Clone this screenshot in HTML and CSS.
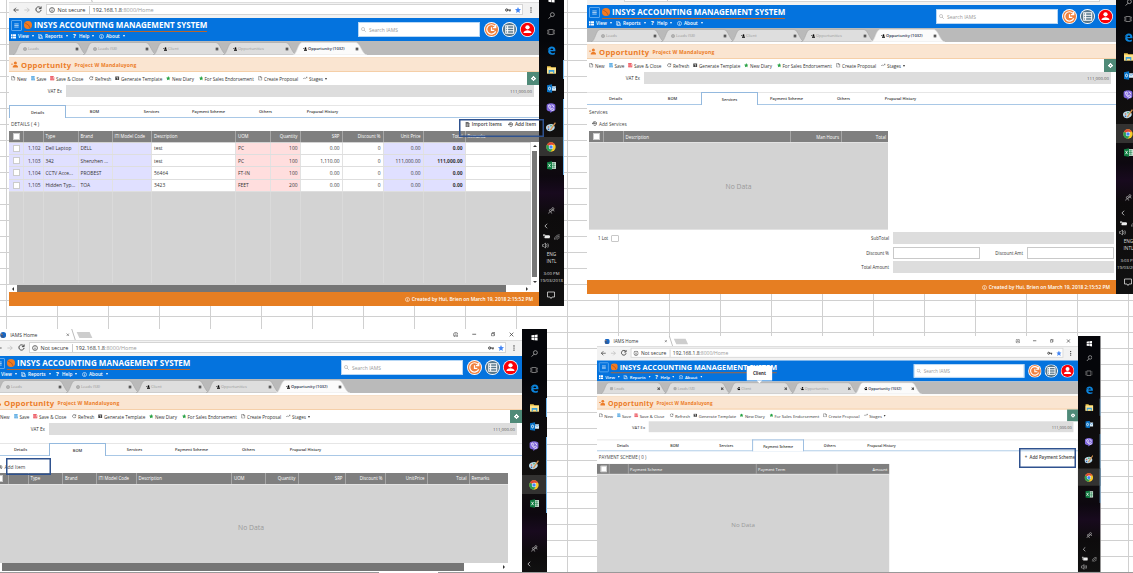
FILE: index.html
```html
<!DOCTYPE html>
<html lang="en">
<head>
<meta charset="utf-8">
<title>IAMS Home</title>
<link rel="stylesheet" href="styles.css">
</head>
<body>
<svg class="defs" aria-hidden="true">
  <symbol id="i-back" viewBox="0 0 16 16"><path d="M15 8H2M8 2L2 8l6 6" fill="none" stroke="currentColor" stroke-width="2"/></symbol>
  <symbol id="i-fwd" viewBox="0 0 16 16"><path d="M1 8h13M8 2l6 6-6 6" fill="none" stroke="currentColor" stroke-width="2"/></symbol>
  <symbol id="i-reload" viewBox="0 0 16 16"><path d="M13 4.500A6 6 0 1 0 14 9M14 1v5H9" fill="none" stroke="currentColor" stroke-width="2"/></symbol>
  <symbol id="i-info" viewBox="0 0 16 16"><circle cx="8" cy="8" r="6.500" fill="none" stroke="currentColor" stroke-width="1.800"/><path d="M8 7v5M8 4v1.500" stroke="currentColor" stroke-width="2"/></symbol>
  <symbol id="i-key" viewBox="0 0 16 16"><circle cx="4.500" cy="8" r="3" fill="none" stroke="currentColor" stroke-width="2.500"/><path d="M7 8h9M13 8v4" stroke="currentColor" stroke-width="2.500"/></symbol>
  <symbol id="i-star" viewBox="0 0 16 16"><path d="M8 0l2.300 5.500 5.700.5-4.400 3.800L13 16 8 12.500 3 16l1.400-6.200L0 6l5.700-.5z" fill="currentColor"/></symbol>
  <symbol id="i-dots" viewBox="0 0 16 16"><circle cx="8" cy="2.500" r="1.600"/><circle cx="8" cy="8" r="1.600"/><circle cx="8" cy="13.500" r="1.600"/></symbol>
  <symbol id="i-x" viewBox="0 0 16 16"><path d="M2 2l12 12M14 2L2 14" stroke="currentColor" stroke-width="2.200"/></symbol>
  <symbol id="i-xb" viewBox="0 0 16 16"><path d="M3 3l10 10M13 3L3 13" stroke="currentColor" stroke-width="4.500"/></symbol>
  <symbol id="i-min" viewBox="0 0 16 16"><path d="M1 8h14" stroke="currentColor" stroke-width="2.500"/></symbol>
  <symbol id="i-max" viewBox="0 0 16 16"><path d="M2 5h9v9H2zM5 5V2h9v9h-3" fill="none" stroke="currentColor" stroke-width="2"/></symbol>
  <symbol id="i-prof" viewBox="0 0 16 16"><circle cx="8" cy="8" r="6.700" fill="none" stroke="currentColor" stroke-width="1.600"/><path d="M3 9.500h10M6 5.500h4" stroke="currentColor" stroke-width="1.600"/></symbol>
  <symbol id="i-menu" viewBox="0 0 16 16"><path d="M1 3h14M1 8h14M1 13h14" stroke="currentColor" stroke-width="2"/></symbol>
  <symbol id="i-logo" viewBox="0 0 16 16"><circle cx="8" cy="8" r="8" fill="#f47b20"/><path d="M2 4l7 4 3 6" fill="none" stroke="#934f2c" stroke-width="1.300"/></symbol>
  <symbol id="i-fav" viewBox="0 0 16 16"><circle cx="8" cy="8" r="8" fill="#1767c4"/><path d="M1 5c3-1 5 0 6 3s2 5 5 6c-5 3-11 0-12-5z" fill="#38598c"/><path d="M1 3l6 3-3 1z" fill="#ff9345"/></symbol>
  <symbol id="i-grid" viewBox="0 0 16 16"><path d="M0 1h5v6H0zM6.500 1H16v6H6.500zM0 8.500h5v6H0zM6.500 8.500H16v6H6.500z" fill="currentColor"/></symbol>
  <symbol id="i-file" viewBox="0 0 16 16"><path d="M2.500 1h7l4 4v10h-11zM9 1v5h5" fill="none" stroke="currentColor" stroke-width="1.700"/></symbol>
  <symbol id="i-import" viewBox="0 0 16 16"><path d="M2 0h8l4 4v12H2z" fill="currentColor" fill-opacity=".8"/><path d="M5 7h6M5 10h6M5 13h4" stroke="#fff" stroke-width="1.400"/></symbol>
  <symbol id="i-copy" viewBox="0 0 16 16"><path d="M1 1h8l2 2v10H1zM5 5h7l3 3v7H5z" fill="none" stroke="currentColor" stroke-width="1.700"/></symbol>
  <symbol id="i-save" viewBox="0 0 16 16"><path d="M1 1h10l4 4v10H1z" fill="none" stroke="currentColor" stroke-width="2"/><path d="M4 1v5h7V1M4 15V9h8v6" fill="currentColor" fill-opacity=".5" stroke="currentColor" stroke-width="1.500"/></symbol>
  <symbol id="i-gear" viewBox="0 0 16 16"><path d="M1 2h14v12H1z" fill="currentColor"/><path d="M5 5h6v2H5zM7 7h2v5H7z" fill="#fff"/></symbol>
  <symbol id="i-plug" viewBox="0 0 16 16"><path d="M6 0h4v3l3 0v3h3v4h-3v3h-3v3H6v-3H3v-3H0V6h3V3h3z" fill="currentColor"/><circle cx="8" cy="8" r="2" fill="#4f8a78"/></symbol>
  <symbol id="i-stage" viewBox="0 0 16 16"><path d="M0 11l4-4 4 2 7-5M11 4h4v4" fill="none" stroke="currentColor" stroke-width="1.600"/></symbol>
  <symbol id="i-person" viewBox="0 0 16 16"><circle cx="10" cy="4.500" r="3.500"/><path d="M4 15v-2c0-3 3-4 6-4s6 1 6 4v2zM0 6h5v2H0z"/></symbol>
  <symbol id="i-globe" viewBox="0 0 16 16"><circle cx="8" cy="8" r="6.500" fill="currentColor" fill-opacity=".45" stroke="currentColor" stroke-width="2"/><path d="M2 6h12M2 10h12M8 2v12" stroke="currentColor"/></symbol>
  <symbol id="i-hist" viewBox="0 0 16 16"><path d="M3 8a6 6 0 1 1 2 4.500M0 6l3 4 3-4M9 5v4h3M6 7h5" fill="none" stroke="currentColor" stroke-width="2.200"/></symbol>
  <symbol id="i-search" viewBox="0 0 16 16"><circle cx="6.500" cy="6.500" r="5" fill="none" stroke="currentColor" stroke-width="1.600"/><path d="M10 10l5 5" stroke="currentColor" stroke-width="2"/></symbol>
  <symbol id="i-clock" viewBox="0 0 16 16"><circle cx="8" cy="8" r="8" fill="#fff"/><circle cx="8" cy="8" r="7" fill="#f0813f"/><path d="M12 5A5 5 0 1 0 12.500 10M12.500 3v3H9.500M8 5.500V9h3" fill="none" stroke="#fff" stroke-width="1.300"/></symbol>
  <symbol id="i-list" viewBox="0 0 16 16"><circle cx="8" cy="8" r="8" fill="#fff"/><circle cx="8" cy="8" r="7" fill="#56768a"/><path d="M4 4h8.500v8H4zM4 6.700h8.500M4 9.400h8.500M6 4v8" fill="none" stroke="#fff" stroke-width="1.100"/></symbol>
  <symbol id="i-user" viewBox="0 0 16 16"><circle cx="8" cy="8" r="8" fill="#fff"/><circle cx="8" cy="8" r="7.200" fill="#fb0007"/><circle cx="8" cy="5.700" r="2.300" fill="#fff"/><path d="M3.700 11.700c0-2.200 2.500-3 4.300-3s4.300.8 4.300 3z" fill="#fff"/></symbol>
  <symbol id="i-tab" viewBox="0 0 75 13"><path d="M0 13C4 12.500 5 .5 9 .5H63C67 .5 69 12.500 74 13z"/></symbol>
  <symbol id="t-win" viewBox="0 0 16 16"><path d="M1 3l6-1v5.500H1zM8 2l7-1v6.500H8zM1 8.500h6V14l-6-1zM8 8.500h7V15l-7-1z" fill="#fff"/></symbol>
  <symbol id="t-search" viewBox="0 0 16 16"><circle cx="10" cy="6" r="4.500" fill="none" stroke="#ccc" stroke-width="1.500"/><path d="M7 9.500L1.500 15" stroke="#ccc" stroke-width="1.700"/></symbol>
  <symbol id="t-view" viewBox="0 0 16 16"><path d="M3.500 3h9v10h-9zM1.500 4.500H0v7h1.500M14.500 4.500H16v7h-1.500" fill="none" stroke="#999" stroke-width="1.500"/></symbol>
  <symbol id="t-edge" viewBox="0 0 16 16"><path d="M1 8C2 3 5 1 8.500 1 13 1 15.500 4 15 9.500H6c.3 3.500 4.500 4 8 2.200v3C8 17 2 15 2 9.500 2 7 4 5 6 4.300 4 4.500 2 6 1 8zM6 7h5c0-3.500-4.500-3.500-5 0z" fill="#0c84dc"/></symbol>
  <symbol id="t-folder" viewBox="0 0 16 16"><path d="M0 2h6l2 2h8v11H0z" fill="#efc750"/><path d="M0 5h16v10H0z" fill="#ffe28a"/><path d="M3 9h10v6h-2v-3H5v3H3z" fill="#3ca1dc"/></symbol>
  <symbol id="t-outlook" viewBox="0 0 16 16"><path d="M8 4h8v8H8z" fill="#d9ebf8"/><path d="M9 5l3.500 3L16 5" stroke="#1675c4" fill="none"/><path d="M0 2l9-1.500v15L0 14z" fill="#0872c6"/><ellipse cx="4.500" cy="8" rx="1.800" ry="2.500" fill="none" stroke="#fff" stroke-width="1.500"/></symbol>
  <symbol id="t-viber" viewBox="0 0 16 16"><path d="M1 4Q1 1 8 .5 15 1 15 4v6q0 3-5 3.500L7 16v-2.500Q1 13 1 10z" fill="#8068dd"/><path d="M4 4l2-1 1.500 2.500L6.500 7 9 9.500l1.500-1 2 1.500-1 2C8 12 4 8 4 4zM9 3q3.500.5 3.500 4" fill="none" stroke="#fff" stroke-width="1.200"/></symbol>
  <symbol id="t-paint" viewBox="0 0 16 16"><ellipse cx="7" cy="9" rx="7" ry="5.500" fill="#b9d8e8" transform="rotate(-15 7 9)"/><circle cx="4" cy="8" r="1.300" fill="#d96542"/><circle cx="8" cy="6" r="1.300" fill="#3aa055"/><circle cx="4" cy="11.500" r="1.300" fill="#345cab"/><path d="M15 1L7 13" stroke="#d8954d" stroke-width="2"/></symbol>
  <symbol id="t-chrome" viewBox="0 0 16 16"><circle cx="8" cy="8" r="7.500" fill="#f7c928"/><path d="M8 8L1.500 4.200A7.500 7.500 0 0 1 14.500 4.500H8z" fill="#df4437"/><path d="M8 8L1.500 4.200A7.500 7.500 0 0 0 7.500 15.500L11 10z" fill="#2c9d58"/><circle cx="8" cy="8" r="3.600" fill="#fff"/><circle cx="8" cy="8" r="2.800" fill="#4285f4"/></symbol>
  <symbol id="t-excel" viewBox="0 0 16 16"><path d="M8 2h8v12H8z" fill="#d9efe2"/><path d="M9 5h6M9 8h6M9 11h6M12 3v10" stroke="#1f7a48"/><path d="M0 2l9-1.500v15L0 14z" fill="#107c41"/><path d="M2.500 5l4 6M6.500 5l-4 6" stroke="#fff" stroke-width="1.300"/></symbol>
  <symbol id="t-people" viewBox="0 0 16 16"><g fill="none" stroke="#ccc" stroke-width="1.400"><circle cx="11" cy="4" r="2.500"/><path d="M8 10c0-4 6-4 6 0"/><circle cx="5.500" cy="8" r="2.300"/><path d="M1.500 15c0-5 7-5 7 0"/></g></symbol>
  <symbol id="t-chev" viewBox="0 0 16 16"><path d="M11 2L5 8l6 6" fill="none" stroke="#ddd" stroke-width="2"/></symbol>
  <symbol id="t-batt" viewBox="0 0 16 16"><path d="M4 5h11v7H4zM15 7h1v3h-1z" fill="#eee"/><path d="M0 3h5v4H0zM2 7v4h3" fill="#aaa"/></symbol>
  <symbol id="t-wifi" viewBox="0 0 16 16"><path d="M1 15C1 8 8 2 15 2M5 15c0-5 4-9 10-9M9 15c0-3 3-5 6-5" fill="none" stroke="#bbb" stroke-width="1.600"/></symbol>
  <symbol id="t-sound" viewBox="0 0 16 16"><path d="M1 6h3l4-4v12L4 10H1zM10 5q3 3 0 6M13 3q4 5 0 10" fill="none" stroke="#ccc" stroke-width="1.400"/></symbol>
  <symbol id="t-note" viewBox="0 0 16 16"><path d="M1 2h14v10H10l-2 3-2-3H1z" fill="none" stroke="#ddd" stroke-width="1.600"/></symbol>
</svg>
<main class="sheet" id="sheet"></main>
<script src="app.js"></script>
</body>
</html>
```

FILE: styles.css
```css
* { box-sizing: border-box; }
html, body { margin: 0; height: 100%; overflow: hidden; }
body { font-family: "Open Sans", "Noto Sans", sans-serif; font-size: 4.9px; color: #333; }
.defs { position: absolute; width: 0; height: 0; }
svg { display: block; flex: none; }
.sheet {
  position: relative; width: 1133px; height: 573px; overflow: hidden; background-color: #fff;
  background-image:
    repeating-linear-gradient(to right, transparent 0 6px, #d0d0d0 6px 7px, transparent 7px 51px),
    repeating-linear-gradient(to bottom, transparent 0 12px, #d0d0d0 12px 13px, transparent 13px 16px);
}
.baseline { position: absolute; left: 0; right: 0; bottom: 0; height: 1px; display: flex; justify-content: space-between; background: #fff; }
.baseline-a { width: 379px; background: #999; }
.baseline-b { width: 695px; background: #999; }

/* one pasted window: browser column + taskbar column */
.shot { position: absolute; display: flex; overflow: hidden; background: #fff; white-space: nowrap; transform-origin: 0 0; }
.shot-details { left: 9px; top: -9px; width: 555px; height: 315px; --main: 530px; }
.shot-services { left: 587px; top: -22px; width: 554px; height: 316px; --main: 529px; }
.shot-bom { left: -8px; top: 329px; width: 555px; height: 243px; --main: 530px; }
.shot-payment { left: 597px; top: 336px; width: 555px; height: 260px; --main: 530px; transform: scale(.9075); }
.main { width: var(--main); flex: none; display: flex; flex-direction: column; position: relative; }

.ctabs { height: 11px; flex: none; display: flex; align-items: center; padding: 0 8px 0 8px; }
.ctab { display: flex; align-items: center; width: 74px; height: 11px; border-right: 1px solid #bbb; transform: skewX(18deg); padding-right: 4px; }
.ctab > * { transform: skewX(-18deg); }
.ctab-title { margin-left: 4px; flex: 1; font-size: 5px; }
.newtab { width: 13px; height: 6px; margin-left: 4px; background: #cdcdcd; transform: skewX(25deg); }
.winctl { margin-left: auto; display: flex; align-items: center; gap: 14px; color: #333; }
.urlrow { height: 16px; flex: none; background: #f2f2f2; display: flex; align-items: center; padding: 0 5px 1.500px 4px; gap: 5px; border-top: 1px solid #ddd; }
.urlbox { margin-left: -1px; height: 11px; width: 478px; background: #fff; border: 1px solid #d5d5d5; display: flex; align-items: center; padding: 0 1.500px; font-size: 5.5px; }
.secure { margin-left: 3px; padding-right: 4px; border-right: 1px solid #ccc; margin-right: 3px; width: 32px; }
.path { color: #999; }
.key { margin-left: auto; margin-right: 4px; }
.blue { color: #4285f4; }
.fade { color: #bbb; }

.head { height: 23px; flex: none; background: #0473de; color: #fff; display: flex; }
.brand { width: 349px; display: flex; flex-direction: column; }
.brandrow { height: 14px; display: flex; align-items: center; padding-left: 2px; }
.burger { width: 11px; height: 11px; border: 1px solid #5ca7ee; display: flex; align-items: center; justify-content: center; margin-right: 2px; border-radius: 1px; }
.brandname { display: flex; align-items: center; height: 13px; margin-top: 1px; width: 183px; border-bottom: 1px solid #b8662e; gap: 2px; }
.brandtext { font-size: 8.050px; font-weight: 700; line-height: 12px; }
.menurow { display: flex; height: 8px; align-items: center; padding-left: 2px; font-weight: 600; font-size: 4.700px; }
.mi { display: flex; align-items: center; gap: 2px; }
.mi-view { width: 27px; } .mi-reports { width: 34px; } .mi-help { width: 27px; }
.caret { width: 0; height: 0; border: 1.600px solid transparent; border-top: 2px solid currentColor; border-bottom: 0; margin-left: 1px; }
.qm { font-weight: 700; font-size: 6px; width: 5px; text-align: center; }
.search { width: 122px; height: 15px; background: #fff; border: 1px solid #b7d7f5; margin-top: 4px; color: #999; display: flex; align-items: center; gap: 3px; padding-left: 2px; font-size: 5px; }
.round { display: flex; gap: 3.300px; margin: 4px 0 0 3.500px; }

.tabs { height: 14px; flex: none; background: #bababa; display: flex; align-items: flex-end; padding-left: 4px; margin-bottom: 2px; font-size: 4px; color: #999; }
.tab { width: 70px; height: 13px; display: flex; align-items: center; position: relative; padding: 0 4px 0 9.500px; gap: 1.500px; }
.tab-shape { position: absolute; left: 0; top: 0; fill: #dedede; stroke: #a5a5a5; stroke-width: .6px; }
.tab > * { position: relative; }
.tab > .tab-shape { position: absolute; }
.tab-close { margin-left: auto; color: #555; }
.tab-on { color: #222c48; font-weight: 600; }
.tab-on .tab-shape { fill: #fbfbfb; stroke: #ddd; }
.peach { height: 15px; flex: none; background: #fae5d1; border-bottom: 1px solid #f5cfa8; border-top: 1px solid #f6dfc8; display: flex; align-items: center; padding-left: 2px; color: #ec7d29; fill: currentColor; font-weight: 700; }
.peach-t { font-size: 7.700px; margin: 0 3px; letter-spacing: .26px; }
.peach-s { font-size: 5px; padding-top: 1px; letter-spacing: .13px; }
.tools { height: 12px; margin-bottom: 1px; flex: none; display: grid; grid-template-columns: 19.500px 19.500px 39px 26px 51px 32.500px 59.500px 45px 1fr 12px; align-items: center; padding-left: 2px; font-size: 4.600px; }
.tool { display: flex; align-items: center; gap: 1.500px; }
.plug { height: 13px; align-self: start; background: #4f8a78; color: #fff; display: flex; align-items: center; justify-content: center; }
.c-blue { color: #2b93dc; } .c-red { color: #e8232f; } .c-green { color: #27a244; } .c-dark { color: #444; }
.vat { height: 12px; flex: none; display: flex; align-items: center; padding-right: 5px; font-size: 4.600px; }
.vat-l { width: 57px; text-align: right; padding-right: 4px; }
.vat-f { flex: 1; height: 12px; background: #ddd; display: flex; align-items: center; justify-content: flex-end; padding-right: 2px; color: #555; font-size: 4.300px; }
.sub { margin-top: 8px; height: 13px; flex: none; display: flex; border-top: 1px solid #e6e6e6; border-bottom: 1px solid #a9c8e6; font-size: 3.950px; font-weight: 600; color: #333; }
.sub-t { width: 57px; display: flex; align-items: center; justify-content: center; }
.sub-on { height: 13px; margin-top: -1px; background: #fff; border: 1px solid #94b9de; border-bottom: 0; }
.panel { flex: 1; min-height: 0; display: flex; flex-direction: column; }
.foot { height: 14px; flex: none; background: #e67e22; color: #fff; display: flex; align-items: center; justify-content: flex-end; gap: 1.500px; padding-right: 6px; font-size: 4.900px; font-weight: 600; }

.cap { display: flex; align-items: center; flex: none; color: #444; padding-left: 2px; }
.cap-actions { margin-left: auto; display: flex; gap: 6px; font-weight: 600; font-size: 4.800px; padding-right: 3px; }
.act { display: flex; align-items: center; gap: 2px; }
.row, .hrow { display: grid; grid-template-columns: var(--cols); flex: none; }
.hrow { height: 11px; background: #7f7f7f; color: #fff; font-size: 4.400px; }
.hrow > * { border-right: 1px solid #a7a7a7; }
.hrow > :last-child { border-right: 0; }
.cell { display: flex; align-items: center; padding: 0 2px; min-width: 0; overflow: hidden; }
.num { justify-content: flex-end; }
.box { width: 7px; height: 7px; background: #fff; border: .5px solid #ccc; margin-left: 1.500px; flex: none; }
.nodata { background: #d3d3d3; color: #999; display: flex; align-items: center; justify-content: center; font-size: 6.800px; flex: none; border-top: 1px solid #e2e2e2; }

/* details */
.shot-details .cap { height: 12.500px; }
.gridwrap { display: flex; height: 143.500px; flex: none; }
.gridhead, .gridbody { --cols: 14.500px 20px 35px 34px 39.500px 84px 34.500px 30px 42px 41px 40px 42px 1fr; }
.gridbody { width: 522px; background: #d3d3d3; padding-top: 1px; }
.row { height: 12.400px; border-bottom: 1px solid #dedede; background: #fff; font-size: 4.900px; }
.row > * { border-right: 1px solid #e2e2e2; }
.lav { background: #e0e0ff; } .pink { background: #ffdede; } .bold { font-weight: 700; }
.guides { display: grid; grid-template-columns: var(--cols); height: 91px; }
.guides > * { border-right: 1px solid #dadada; }
.vscroll { width: 8px; display: flex; flex-direction: column; align-items: center; justify-content: space-between; padding: 3px 0 2px; }
.vthumb { width: 5px; height: 126px; background: #777; margin-right: 1px; }
.up, .down, .left, .right { border: 2px solid transparent; width: 0; height: 0; }
.up { border-bottom: 2.500px solid #333; border-top: 0; } .down { border-top: 2.500px solid #333; border-bottom: 0; }
.left { border-right: 2.500px solid #333; border-left: 0; } .right { border-left: 2.500px solid #333; border-right: 0; }
.hscroll { display: flex; align-items: center; height: 8px; flex: none; }
.hthumb { height: 8px; background: #757575; }
.shot-details .hthumb { width: 489px; margin: 0 20.500px 0 3px; }
.shot-details .hscroll { padding-left: 2.500px; }

/* services */
.shot-services .cap { height: 15px; }
.shot-services .cap-top { height: 11px; padding-top: 3px; }
.act-services { padding-left: 3px; font-size: 4.700px; }
.shot-services .grid { margin-left: 2px; width: 299px; --cols: 14.500px 20px 167px 51.500px 1fr; }
.shot-services .nodata { height: 88px; border-bottom: 1px solid #e2e2e2; }
.totals { display: grid; grid-template-columns: 306px 87px 47px 1fr; row-gap: 2.500px; grid-template-rows: 12px 12px 12px; margin: 2px 2px 6px 0; align-items: center; font-size: 4.400px; }
.lot { display: flex; align-items: center; gap: 3px; padding-left: 11px; }
.lot-box { width: 8px; height: 7px; border: 1px solid #c8c8c8; border-radius: 1px; }
.lotlabel { display: flex; justify-content: space-between; align-items: center; padding-right: 4px; }
.tl { text-align: right; padding-right: 4px; }
.fill { grid-column: 2 / 5; background: #ddd; height: 12px; }
.inp { border: 1px solid #c9c9c9; height: 12px; }

/* bom */
.shot-bom .cap { height: 16.500px; padding: 5px 0 0 6px; }
.shot-bom .grid { width: 516px; --cols: 16.500px 20px 34.500px 33.500px 40px 95.500px 34px 32.500px 47px 40px 42px 42px 1fr; }
.shot-bom .nodata { height: 79px; padding-top: 8px; padding-left: 2px; }
.shot-bom .hthumb { width: 462px; margin-left: 10px; margin-right: 39px; }

/* payment */
.shot-payment .cap { height: 14px; }
.shot-payment .grid { width: 322px; --cols: 13.500px 21px 141px 89.500px 1fr; }
.shot-payment .nodata { height: 120px; padding-bottom: 8px; }
.tip { position: absolute; left: 165px; top: 33px; width: 28px; height: 16px; background: #fff; display: flex; align-items: center; justify-content: center; font-weight: 700; font-size: 4.900px; }
.tip::after { content: ""; position: absolute; top: 16px; left: 11px; border: 3px solid transparent; border-top-color: #fff; border-bottom: 0; }

/* outlines drawn over the windows */
.mark { position: absolute; border: 1px solid #2f528f; box-shadow: inset 0 0 0 .5px #2f528f; }
.mark-a { left: 459px; top: 119px; width: 85px; height: 18px; }
.mark-b { left: 6px; top: 458px; width: 45px; height: 17px; }
.mark-c { left: 1019px; top: 448px; width: 57px; height: 20px; }

.task { width: 25px; flex: none; background: linear-gradient(#05060a 0 50px, #0b0a0d 70px, #12100f 150px, #0d080f 185px, #180a1e 202px, #0d0b0c 225px, #111 100%); display: flex; flex-direction: column; color: #ddd; font-size: 4.700px; }
.ti { height: 19.200px; flex: none; display: flex; align-items: center; justify-content: center; border-right: 1px solid transparent; }
.ti-s { height: 16px; } .ti-v { height: 18px; }
.run { border-right-color: #76b9ed; } .hot { background: #333231; }
.gap { height: 27.500px; flex: none; }
.ti-p { height: 16px; } .ti-c { height: 14px; padding-right: 10px; }
.ti-w { height: 8px; gap: 4px; } .ti-o { height: 9px; padding-right: 11px; }
.lang { height: 16px; line-height: 7px; text-align: center; flex: none; padding-top: 1px; margin-bottom: 4px; }
.clock { height: 15px; line-height: 7px; text-align: center; flex: none; font-size: 4.300px; display: flex; flex-direction: column; align-items: center; }
.ti-n { height: 14px; margin-top: 3px; }
```

FILE: app.js
```js
const icon = (id, w, h = w, cls = '') =>
  `<svg class="${cls}" width="${w}" height="${h}"><use href="#${id}"/></svg>`;

const browserBar = () => `
  <div class="ctabs">
    <div class="ctab">${icon('i-fav', 6)}<span class="ctab-title">IAMS Home</span>${icon('i-x', 3.5)}</div>
    <div class="newtab"></div>
    <div class="winctl">${icon('i-prof', 5.5)}${icon('i-min', 4.5)}${icon('i-max', 4.5)}${icon('i-x', 5)}</div>
  </div>
  <div class="urlrow">
    ${icon('i-back', 6)}${icon('i-fwd', 6, 6, 'fade')}${icon('i-reload', 7)}
    <div class="urlbox">${icon('i-info', 6)}<span class="secure">Not secure</span><span>192.168.1.8</span><span class="path">:8000/Home</span>
      ${icon('i-key', 6, 6, 'key')}${icon('i-star', 6, 6, 'blue')}</div>
    ${icon('i-dots', 6)}
  </div>`;

const header = () => `
  <div class="head">
    <div class="brand">
      <div class="brandrow"><div class="burger">${icon('i-menu', 5)}</div>
        <div class="brandname">${icon('i-logo', 8)}<span class="brandtext">INSYS ACCOUNTING MANAGEMENT SYSTEM</span></div></div>
      <div class="menurow">
        <div class="mi mi-view">${icon('i-grid', 5)}<span>View</span><i class="caret"></i></div>
        <div class="mi mi-reports">${icon('i-copy', 5)}<span>Reports</span><i class="caret"></i></div>
        <div class="mi mi-help"><span class="qm">?</span><span>Help</span><i class="caret"></i></div>
        <div class="mi">${icon('i-info', 5)}<span>About</span><i class="caret"></i></div>
      </div>
    </div>
    <div class="search">${icon('i-search', 5)}Search IAMS</div>
    <div class="round">${icon('i-clock', 15)}${icon('i-list', 15)}${icon('i-user', 15)}</div>
  </div>`;

const docTabs = [['i-globe', 'Leads'], ['i-globe', 'Leads (58)'], ['i-person', 'Client'], ['i-person', 'Opportunities'], ['i-person', 'Opportunity (1032)']];
const tabStrip = () => `<div class="tabs">${docTabs.map(([ic, t], i) => `
  <div class="tab ${i === 4 ? 'tab-on' : ''}">${icon('i-tab', 75, 13, 'tab-shape')}${icon(ic, 4)}<span>${t}</span>${icon('i-xb', 4, 4, 'tab-close')}</div>`).join('')}</div>`;

const toolItems = [['i-file', 'New', 'c-dark'], ['i-save', 'Save', 'c-blue'], ['i-save', 'Save &amp; Close', 'c-red'], ['i-reload', 'Refresh', 'c-dark'],
  ['i-gear', 'Generate Template', 'c-dark'], ['i-star', 'New Diary', 'c-green'], ['i-star', 'For Sales Endorsement', 'c-green'],
  ['i-file', 'Create Proposal', 'c-dark'], ['i-stage', 'Stages', 'c-dark']];
const pageHead = active => `
  <div class="peach">${icon('i-person', 7)}<span class="peach-t">Opportunity</span><span class="peach-s">Project W Mandaluyong</span></div>
  <div class="tools">${toolItems.map(([ic, t, c]) => `<div class="tool">${icon(ic, 4.5, 4.5, c)}${t}${t === 'Stages' ? '<i class="caret"></i>' : ''}</div>`).join('')}
    <div class="plug">${icon('i-plug', 5)}</div></div>
  <div class="vat"><span class="vat-l">VAT Ex</span><div class="vat-f">111,000.00</div></div>
  <div class="sub">${['Details', 'BOM', 'Services', 'Payment Scheme', 'Others', 'Proposal History'].map((t, i) =>
    `<div class="sub-t ${i === active ? 'sub-on' : ''}">${t}</div>`).join('')}</div>`;

const footer = () => `<div class="foot">${icon('i-info', 5)}Created by Hui, Brien on March 19, 2018 2:15:52 PM</div>`;

const taskbar = time => `
  <div class="task">
    <div class="ti ti-s">${icon('t-win', 7)}</div><div class="ti ti-s">${icon('t-search', 7)}</div><div class="ti ti-v">${icon('t-view', 8)}</div>
    <div class="ti">${icon('t-edge', 9)}</div><div class="ti run">${icon('t-folder', 9)}</div><div class="ti">${icon('t-outlook', 9)}</div>
    <div class="ti run">${icon('t-viber', 10)}</div><div class="ti run">${icon('t-paint', 10)}</div>
    <div class="ti run hot">${icon('t-chrome', 10)}</div><div class="ti run">${icon('t-excel', 9)}</div>
    <div class="gap"></div>
    <div class="ti ti-p">${icon('t-people', 7)}</div><div class="ti ti-c">${icon('t-chev', 6)}</div>
    <div class="ti ti-w">${icon('t-batt', 7)}${icon('t-wifi', 6)}</div><div class="ti ti-o">${icon('t-sound', 7)}</div>
    <div class="lang">ENG<br>INTL</div><div class="clock"><span>${time}</span><span>19/03/2018</span></div>
    <div class="ti ti-n">${icon('t-note', 8)}</div>
  </div>`;

const headRow = (cols, numeric) => `<div class="hrow"><div class="cell"><i class="box"></i></div><div></div>${cols.map(c =>
  `<div class="cell ${numeric.includes(c) ? 'num' : ''}">${c}</div>`).join('')}</div>`;
const numeric = ['Quantity', 'SRP', 'Discount %', 'Unit Price', 'UnitPrice', 'Total', 'Man Hours', 'Amount'];

const itemRows = [
  ['1,102', 'Dell Laptop', 'DELL', '', 'test', 'PC', '100', '0.00', '0', '0.00', '0.00', ''],
  ['1,103', '342', 'Shenzhen ...', '', 'test', 'PC', '100', '1,110.00', '0', '111,000.00', '111,000.00', ''],
  ['1,104', 'CCTV Acce...', 'PROBEST', '', '56464', 'FT-IN', '100', '0.00', '0', '0.00', '0.00', ''],
  ['1,105', 'Hidden Typ...', 'TOA', '', '3423', 'FEET', '200', '0.00', '0', '0.00', '0.00', '']];
const tone = ['lav num', 'lav', 'lav', 'lav', '', 'pink', 'pink num', 'num', 'num', 'lav num', 'lav num bold', ''];
const itemCols = up => ['Type', 'Brand', 'ITI Model Code', 'Description', 'UOM', 'Quantity', 'SRP', 'Discount %', up, 'Total', 'Remarks'];

const details = `
  <div class="cap">DETAILS ( 4 )<div class="cap-actions"><span class="act">${icon('i-import', 5)}Import Items</span><span class="act">${icon('i-hist', 5)}Add Item</span></div></div>
  <div class="gridhead">${headRow(itemCols('Unit Price'), numeric)}</div>
  <div class="gridwrap"><div class="gridbody">${itemRows.map(r => `<div class="row"><div class="cell lav"><i class="box"></i></div>${r.map((v, i) =>
    `<div class="cell ${tone[i]}">${v}</div>`).join('')}</div>`).join('')}<div class="guides">${'<i></i>'.repeat(12)}</div></div>
    <div class="vscroll"><i class="up"></i><i class="vthumb"></i><i class="down"></i></div></div>
  <div class="hscroll"><i class="left"></i><i class="hthumb"></i><i class="right"></i></div>`;

const services = `
  <div class="cap cap-top">Services</div>
  <div class="cap"><span class="act act-services">${icon('i-hist', 5)}Add Services</span></div>
  <div class="grid">${headRow(['Description', 'Man Hours', 'Total'], numeric)}<div class="nodata">No Data</div></div>
  <div class="totals">
    <div class="lotlabel"><span class="lot">1 Lot <i class="lot-box"></i></span><span>SubTotal</span></div><div class="fill"></div>
    <div class="tl">Discount %</div><div class="inp"></div><div class="tl">Discount Amt</div><div class="inp"></div>
    <div class="tl">Total Amount</div><div class="fill"></div>
  </div>`;

const bom = `
  <div class="cap"><span class="act">${icon('i-hist', 4.5)}Add Item</span></div>
  <div class="grid">${headRow(itemCols('UnitPrice'), numeric)}<div class="nodata">No Data</div></div>
  <div class="hscroll"><i class="hthumb"></i><i class="right"></i></div>`;

const payment = `
  <div class="cap">PAYMENT SCHEME ( 0 )<div class="cap-actions"><span class="act">+&nbsp; Add Payment Scheme</span></div></div>
  <div class="grid">${headRow(['Payment Scheme', 'Payment Term', 'Amount'], numeric)}<div class="nodata">No Data</div></div>`;

const shot = (name, active, body, time, foot, extra = '') => `
  <section class="shot shot-${name}"><div class="main">${browserBar()}${header()}${tabStrip()}${pageHead(active)}
    <div class="panel">${body}</div>${foot}${extra}</div>${taskbar(time)}</section>`;

/* the two lower windows end above their footer */
document.getElementById('sheet').innerHTML =
  shot('details', 0, details, '3:00 PM', footer()) +
  shot('services', 2, services, '3:03 PM', footer()) +
  shot('bom', 1, bom, '3:03 PM', '') +
  shot('payment', 3, payment, '3:03 PM', '', '<div class="tip">Client</div>') +
  '<div class="mark mark-a"></div><div class="mark mark-b"></div><div class="mark mark-c"></div>' +
  '<div class="baseline"><i class="baseline-a"></i><i class="baseline-b"></i></div>';
```
